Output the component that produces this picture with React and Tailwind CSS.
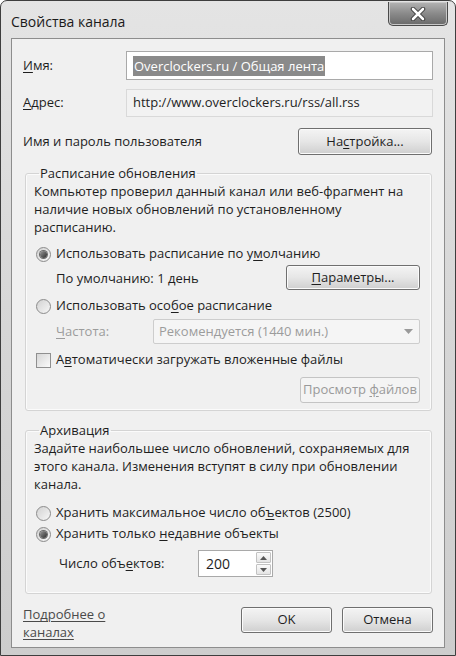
import React from 'react'

const font = { fontFamily: '"Open Sans", "Noto Sans", "Liberation Sans", sans-serif' }

const Btn = ({ children, className = '', disabled }) => (
  <div
    className={`flex items-center justify-center rounded-[3px] border text-[13px] ${
      disabled
        ? 'border-[#c4c4c4] bg-[#f4f4f4] text-[#9a9a9a]'
        : 'border-[#6f6f6f] bg-gradient-to-b from-[#f4f4f4] via-[#e6e6e6] to-[#cfcfcf] text-[#1e1e1e] shadow-[inset_0_0_0_1px_#fbfbfb]'
    } ${className}`}
  >
    <span>{children}</span>
  </div>
)

const Radio = ({ checked }) => (
  <div className="flex h-[15px] w-[15px] shrink-0 items-center justify-center rounded-full border border-[#8b8b8b] bg-gradient-to-br from-[#d2d2d2] to-[#f7f7f7]">
    {checked && (
      <div className="h-[7px] w-[7px] rounded-full bg-gradient-to-br from-[#9a9a9a] to-[#2f2f2f] shadow-[0_0_0_1px_#6a6a6a]" />
    )}
  </div>
)

const U = ({ children }) => <span className="underline underline-offset-2">{children}</span>

export default function App() {
  return (
    <div style={font} className="flex h-[656px] w-[456px] flex-col overflow-hidden rounded-t-[7px] border border-[#3e3e3e] bg-gradient-to-b from-[#e4e4e4] via-[#d6d6d6] to-[#cdcdcd] text-[13px] text-[#1e1e1e]">
      {/* title bar */}
      <div className="flex h-[37px] shrink-0 items-start justify-between">
        <div className="pl-[10px] pt-[12px] text-[14px] leading-[18px] text-[#1a1a1a]">Свойства канала</div>
        <div className="mr-[7px] mt-[1px] flex h-[24px] w-[60px] items-center justify-center rounded-b-[5px] border border-t-0 border-[#4a4a4a] bg-gradient-to-b from-[#b4b4b4] via-[#8a8a8a] to-[#6a6a6a] shadow-[inset_0_0_0_1px_#c8c8c8]">
          <svg width="16" height="14" viewBox="0 0 16 14">
            <path d="M3 2 L13 12 M13 2 L3 12" stroke="#3a3a3a" strokeWidth="4.5" strokeLinecap="round" />
            <path d="M3 2 L13 12 M13 2 L3 12" stroke="#ffffff" strokeWidth="2.6" strokeLinecap="round" />
          </svg>
        </div>
      </div>

      {/* client area */}
      <div className="mx-[10px] mb-[7px] flex flex-1 flex-col border border-[#8d8d8d] bg-[#f0f0f0] px-[11px] pt-[12px]">
        {/* name */}
        <div className="flex h-[29px] items-center">
          <div className="w-[103px]"><U>И</U>мя:</div>
          <div className="flex h-[29px] flex-1 items-center border border-[#a9a9a9] bg-white pl-[6px]">
            <span className="bg-[#8a8a8a] px-[1px] leading-[20px] text-white">Overclockers.ru / Общая лента</span>
          </div>
        </div>
        {/* address */}
        <div className="mt-[9px] flex h-[28px] items-center">
          <div className="w-[103px]"><U>А</U>дрес:</div>
          <div className="flex h-[28px] flex-1 items-center border border-[#d9d9d9] bg-[#f2f2f2] pl-[6px]">
            http://www.overclockers.ru/rss/all.rss
          </div>
        </div>
        {/* login */}
        <div className="mt-[11px] flex h-[27px] items-center justify-between">
          <div>Имя и пароль пользователя</div>
          <Btn className="mr-[1px] h-[27px] w-[134px]">На<U>с</U>тройка...</Btn>
        </div>

        {/* schedule group */}
        <fieldset className="ml-[2px] mr-[1px] mt-[9px] rounded-[3px] border border-[#d4d4d4] pb-[7px] pl-[8px] pr-[11px] shadow-[inset_0_0_0_1px_#fbfbfb]">
          <legend className="ml-[5px] px-[1px] leading-[18px]">Расписание обновления</legend>
          <div className="whitespace-nowrap leading-[18px]">
            Компьютер проверил данный канал или веб-фрагмент на
            <br />
            наличие новых обновлений по установленному
            <br />
            расписанию.
          </div>
          <div className="mt-[8px] flex h-[20px] items-center gap-[5px] pl-[2px]">
            <Radio checked />
            <span>Использовать расписание по у<U>м</U>олчанию</span>
          </div>
          <div className="mt-[1px] flex h-[25px] items-center justify-between pl-[22px]">
            <span className="pt-[2px]">По умолчанию: 1 день</span>
            <Btn className="h-[25px] w-[134px]"><U>П</U>араметры...</Btn>
          </div>
          <div className="mt-[6px] flex h-[20px] items-center gap-[5px] pl-[2px]">
            <Radio />
            <span>Использовать осо<U>б</U>ое расписание</span>
          </div>
          <div className="mt-[3px] flex h-[25px] items-center pl-[22px]">
            <span className="w-[97px] text-[#9c9c9c]"><U>Ч</U>астота:</span>
            <div className="flex h-[25px] flex-1 items-center justify-between rounded-[2px] border border-[#cdcdcd] bg-[#f5f5f5] pl-[5px] pr-[6px] text-[#9c9c9c]">
              <span>Рекомендуется (1440 мин.)</span>
              <svg width="9" height="5" viewBox="0 0 9 5"><path d="M0 0 H9 L4.5 5 Z" fill="#9a9a9a" /></svg>
            </div>
          </div>
          <div className="mt-[6px] flex h-[20px] items-center gap-[5px] pl-[2px]">
            <div className="h-[15px] w-[15px] shrink-0 border border-[#8f8f8f] bg-gradient-to-br from-[#d6d6d6] to-[#fafafa]" />
            <span>А<U>в</U>томатически загружать вложенные файлы</span>
          </div>
          <div className="mt-[7px] flex justify-end">
            <Btn disabled className="h-[26px] w-[120px]">Просмотр <U>ф</U>айлов</Btn>
          </div>
        </fieldset>

        {/* archive group */}
        <fieldset className="ml-[2px] mr-[1px] mt-[10px] rounded-[3px] border border-[#d4d4d4] pb-[16px] pl-[8px] pr-[11px] shadow-[inset_0_0_0_1px_#fbfbfb]">
          <legend className="ml-[5px] px-[1px] leading-[18px]">Архивация</legend>
          <div className="whitespace-nowrap leading-[18px]">
            Задайте наибольшее число обновлений, сохраняемых для
            <br />
            этого канала. Изменения вступят в силу при обновлении
            <br />
            канала.
          </div>
          <div className="mt-[10px] flex h-[20px] items-center gap-[5px] pl-[2px]">
            <Radio />
            <span>Хранить максимальное число об<U>ъ</U>ектов (2500)</span>
          </div>
          <div className="mt-[1px] flex h-[20px] items-center gap-[5px] pl-[2px]">
            <Radio checked />
            <span>Хранить только <U>н</U>едавние объекты</span>
          </div>
          <div className="mt-[6px] flex h-[27px] items-center pl-[25px]">
            <span className="w-[139px]">Число объ<U>е</U>ктов:</span>
            <div className="flex h-[27px] w-[75px] border border-[#a9a9a9] bg-white">
              <div className="flex flex-1 items-center pl-[7px] text-[14px]">200</div>
              <div className="flex w-[17px] flex-col gap-[1px] p-[1px]">
                <div className="flex flex-1 items-center justify-center rounded-[1px] border border-[#c2c2c2] bg-gradient-to-b from-[#fafafa] to-[#e4e4e4]">
                  <svg width="7" height="4" viewBox="0 0 7 4"><path d="M0 4 H7 L3.5 0 Z" fill="#555" /></svg>
                </div>
                <div className="flex flex-1 items-center justify-center rounded-[1px] border border-[#c2c2c2] bg-gradient-to-b from-[#fafafa] to-[#e4e4e4]">
                  <svg width="7" height="4" viewBox="0 0 7 4"><path d="M0 0 H7 L3.5 4 Z" fill="#555" /></svg>
                </div>
              </div>
            </div>
          </div>
        </fieldset>

        {/* footer */}
        <div className="mt-[11px] flex items-start justify-between">
          <div className="leading-[18px] text-[#4a4a4a] underline underline-offset-2">
            Подробнее о
            <br />
            каналах
          </div>
          <div className="mt-[2px] flex gap-[10px]">
            <Btn className="h-[26px] w-[91px]">OK</Btn>
            <Btn className="h-[26px] w-[91px]">Отмена</Btn>
          </div>
        </div>
      </div>
    </div>
  )
}
